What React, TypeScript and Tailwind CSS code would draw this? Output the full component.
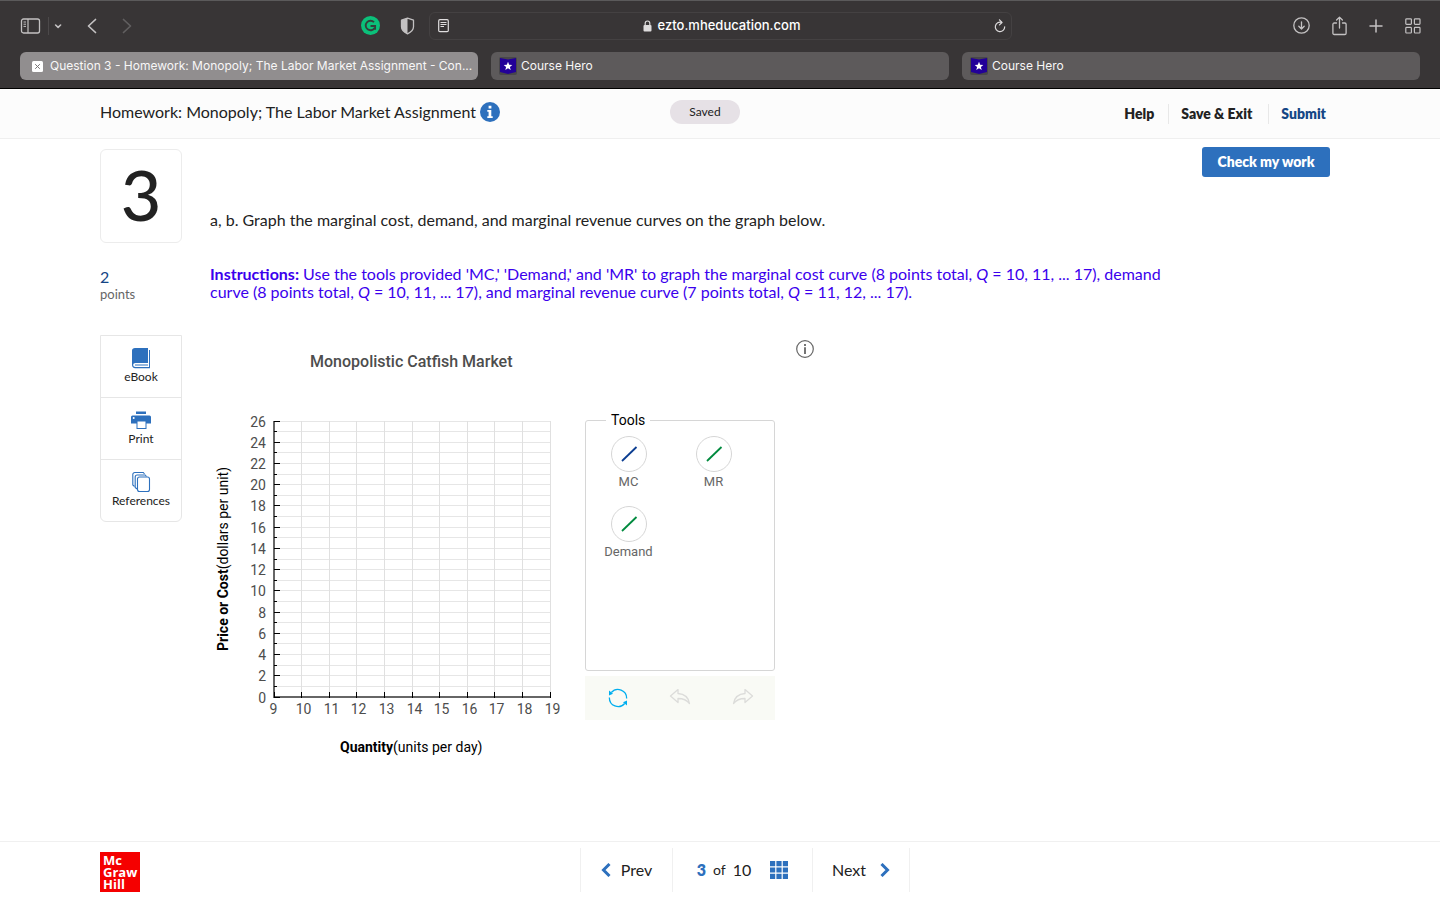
import React from 'react';
import clsx from 'clsx';

const tabs = [
  { title: 'Question 3 - Homework: Monopoly; The Labor Market Assignment - Con...', active: true },
  { title: 'Course Hero', active: false },
  { title: 'Course Hero', active: false },
];

const tools = [
  { name: 'MC', color: '#0b3d91' },
  { name: 'MR', color: '#008a3e' },
  { name: 'Demand', color: '#008a3e' },
];

const BrowserToolbar: React.FC = () => (
  <div className="flex h-[49px] items-center text-[#c3c1c2]">
    <div className="flex flex-1 items-center pl-5">
      <button aria-label="Show sidebar">
        <svg width="21" height="16" viewBox="0 0 21 16" fill="none" stroke="currentColor">
          <rect x="1.5" y="1" width="18" height="14" rx="2" strokeWidth="1.3" />
          <path d="M8 1v14" strokeWidth="1.2" />
          <path d="M3.5 4h2.5M3.5 6.2h2.5M3.5 8.4h2.5" strokeWidth="1" />
        </svg>
      </button>
      <span className="ml-[7px] h-[18px] w-px bg-[#4c494a]" />
      <button aria-label="Tab groups" className="ml-[5px]">
        <svg width="8" height="8" viewBox="0 0 8 8" fill="none" stroke="currentColor" strokeWidth="1.6" strokeLinecap="round" strokeLinejoin="round">
          <path d="M1.6 3L4.1 5.4 6.6 3" />
        </svg>
      </button>
      <button aria-label="Back" className="ml-6">
        <svg width="12" height="16" viewBox="0 0 12 16" fill="none" stroke="currentColor" strokeWidth="1.7" strokeLinecap="round" strokeLinejoin="round">
          <path d="M9.5 1.5L2.5 8l7 6.5" />
        </svg>
      </button>
      <button aria-label="Forward" className="ml-[23px] text-[#615f60]">
        <svg width="12" height="16" viewBox="0 0 12 16" fill="none" stroke="currentColor" strokeWidth="1.7" strokeLinecap="round" strokeLinejoin="round">
          <path d="M2.5 1.5l7 6.5-7 6.5" />
        </svg>
      </button>
      <div className="ml-auto flex items-center gap-5 pr-[14px]">
        <button aria-label="Grammarly">
          <svg width="19" height="19" viewBox="0 0 19 19" fill="none">
            <circle cx="9.5" cy="9.5" r="9.5" fill="#0bc07a" />
            <path d="M13 6.200A4.800 4.800 0 1 0 13.600 12" stroke="#33403a" strokeWidth="1.900" />
            <path d="M9.500 10h4.600v3.800" stroke="#33403a" strokeWidth="1.900" />
          </svg>
        </button>
        <button aria-label="Privacy report">
          <svg width="15" height="18" viewBox="0 0 15 18" fill="none">
            <path d="M7.5 1.200l6 2v6.600c0 3.200-2.500 5.400-6 7-3.500-1.600-6-3.800-6-7V3.200z" stroke="#c3c1c2" strokeWidth="1.3" strokeLinejoin="round" />
            <path d="M7.5 1.200v15.600c-3.500-1.600-6-3.800-6-7V3.200z" fill="#c3c1c2" />
          </svg>
        </button>
      </div>
    </div>

    <div className="flex h-7 w-[583px] items-center rounded-md border border-[#444142] pr-[5px] pl-2">
      <button aria-label="Reader view">
        <svg width="11" height="14" viewBox="0 0 11 14" fill="none" stroke="#e0dedf">
          <rect x="0.7" y="0.7" width="9.600" height="12" rx="1.2" strokeWidth="1.2" />
          <path d="M2.5 3.5h6M2.5 5.5h6M2.5 7.5h3.500" />
        </svg>
      </button>
      <div className="flex flex-1 items-center justify-center gap-[6px] text-[13px] font-medium text-white">
        <svg width="9" height="12" viewBox="0 0 9 12" fill="none">
          <rect x="0.5" y="5" width="8" height="6.500" rx="1" fill="#dddbdc" />
          <path d="M2.2 5.500V3.300a2.300 2.300 0 0 1 4.600 0v2.200" stroke="#dddbdc" strokeWidth="1.2" />
        </svg>
        ezto.mheducation.com
      </div>
      <button aria-label="Reload">
        <svg width="12" height="14" viewBox="0 0 12 14" fill="none" stroke="#dddbdc" strokeWidth="1.2" strokeLinecap="round" strokeLinejoin="round">
          <path d="M7.5 3.400A4.700 4.700 0 1 0 10.700 7.800" />
          <path d="M5.5 0.800L8 3.500 5.500 5.900" />
        </svg>
      </button>
    </div>

    <div className="flex flex-1 items-center justify-end gap-[22px] pr-[19px]">
      <button aria-label="Downloads">
        <svg width="17" height="17" viewBox="0 0 17 17" fill="none" stroke="currentColor" strokeWidth="1.3" strokeLinecap="round" strokeLinejoin="round">
          <circle cx="8.5" cy="8.5" r="7.700" />
          <path d="M8.5 4.800v7M5.800 9.300l2.700 2.700 2.700-2.700" />
        </svg>
      </button>
      <button aria-label="Share">
        <svg width="15" height="20" viewBox="0 0 15 20" fill="none" stroke="currentColor" strokeWidth="1.3" strokeLinecap="round" strokeLinejoin="round">
          <path d="M4.5 7H2.200a1.300 1.300 0 0 0-1.300 1.300v8.900a1.300 1.300 0 0 0 1.300 1.300h10.600a1.300 1.300 0 0 0 1.300-1.300V8.300A1.300 1.300 0 0 0 12.800 7h-2.300" />
          <path d="M7.5 12V1.200M4.600 4l2.900-2.900L10.400 4" />
        </svg>
      </button>
      <button aria-label="New tab">
        <svg width="14" height="14" viewBox="0 0 14 14" stroke="currentColor" strokeWidth="1.5" strokeLinecap="round">
          <path d="M7 1v12M1 7h12" />
        </svg>
      </button>
      <button aria-label="Tab overview">
        <svg width="16" height="16" viewBox="0 0 16 16" fill="none" stroke="currentColor" strokeWidth="1.2">
          <rect x="0.8" y="0.8" width="5.600" height="5.600" rx="0.8" />
          <rect x="9.4" y="0.8" width="5.600" height="5.600" rx="0.8" />
          <rect x="0.8" y="9.4" width="5.600" height="5.600" rx="0.8" />
          <rect x="9.4" y="9.4" width="5.600" height="5.600" rx="0.8" />
        </svg>
      </button>
    </div>
  </div>
);

const BrowserTabs: React.FC = () => (
  <div className="grid grid-cols-3 gap-[13px] px-5 pt-[2px] pb-2">
    {tabs.map((tab, i) => (
      <button
        key={i}
        className={clsx(
          'flex h-7 min-w-0 items-center rounded-md text-left text-xs text-[#f8f7f7]',
          tab.active ? 'gap-[7px] bg-[#918e8f] pl-3' : 'gap-1 bg-[#5d5a5b] pl-2'
        )}
      >
        {tab.active ? (
          <svg width="11" height="11" viewBox="0 0 11 11" className="shrink-0">
            <rect width="11" height="11" rx="1.5" fill="#fff" />
            <path d="M3.200 3.200l4.600 4.600M7.800 3.200L3.200 7.800" stroke="#777475" strokeWidth="1" />
          </svg>
        ) : (
          <svg width="18" height="18" viewBox="0 0 18 18" className="shrink-0">
            <rect width="18" height="18" rx="2" fill="#49474a" />
            <path d="M1 1l8 1.500L17 1v14l-8 2-8-2z" fill="#220098" />
            <path d="M9 4.800l1.200 2.900 3.100.2-2.400 2 .8 3L9 11.300l-2.700 1.600.8-3-2.400-2 3.100-.2z" fill="#fff" />
          </svg>
        )}
        <span className="whitespace-nowrap">{tab.title}</span>
      </button>
    ))}
  </div>
);

const PageHeader: React.FC = () => (
  <header className="flex h-[50px] items-center border-b border-[#efefef] bg-[#fcfcfc] pr-[114px] pl-[100px] text-[#222]">
    <div className="flex w-[570px] items-center gap-1 pb-1">
      <h1 className="text-base">Homework: Monopoly; The Labor Market Assignment</h1>
      <button aria-label="Assignment information">
        <svg width="20" height="20" viewBox="0 0 20 20">
          <circle cx="10" cy="10" r="10" fill="#2d70bd" />
          <path d="M8.600 3.800h2.800v2.700H8.600zM7.300 8h4v6.200h1.400v1.700H7.300v-1.700h1.300V9.700H7.300z" fill="#fff" />
        </svg>
      </button>
    </div>
    <div className="mb-1 flex h-6 w-[70px] items-center justify-center rounded-full bg-[#e6e1e6] text-xs">Saved</div>
    <nav className="ml-auto flex items-center text-sm leading-5 font-extrabold">
      <a href="#help" className="pr-[14px]">Help</a>
      <a href="#exit" className="border-l border-[#e8e8e8] px-3 pr-4">Save &amp; Exit</a>
      <a href="#submit" className="border-l border-[#e8e8e8] pl-3 text-[#154685]">Submit</a>
    </nav>
  </header>
);

const resources = [
  {
    label: 'eBook',
    icon: (
      <svg width="20" height="22" viewBox="0 0 20 22">
        <path d="M4 1h13v15H4.500C3 16 2.200 16.800 2.200 18S3 20 4.500 20H18V3h1v18.200H4.200C2.200 21.200 1 20 1 18V3.500C1 2 2.200 1 4 1z" fill="#2d70bd" />
        <path d="M4 18h13" stroke="#2d70bd" strokeWidth="1" />
      </svg>
    ),
  },
  {
    label: 'Print',
    icon: (
      <svg width="20" height="22" viewBox="0 0 20 22">
        <path d="M5 2.500h10V5H5z" fill="#2d70bd" />
        <path d="M1.500 6.500h17A1.500 1.500 0 0 1 20 8v6.500h-4.500V20h-10v-5.500H0V8a1.500 1.500 0 0 1 1.500-1.500z" fill="#2d70bd" />
        <path d="M6.500 12.500h8V19h-8z" fill="#fff" />
        <circle cx="2.700" cy="9" r="1" fill="#fff" />
      </svg>
    ),
  },
  {
    label: 'References',
    icon: (
      <svg width="20" height="22" viewBox="0 0 20 22" fill="#fff" stroke="#2d70bd" strokeWidth="1.1">
        <path d="M3.500 15.500L1.800 14V3.500a2 2 0 0 1 2-2h8.500L13.500 3" />
        <path d="M6 18l-1.800-1.500V6a2 2 0 0 1 2-2h8L15.500 5.500" />
        <path d="M8.500 6h8a2 2 0 0 1 2 2v10.500a2 2 0 0 1-2 2H8.500a2 2 0 0 1-2-2V8a2 2 0 0 1 2-2z" />
      </svg>
    ),
  },
];

const Sidebar: React.FC = () => (
  <aside className="w-[82px] shrink-0 pt-[2px]">
    <div className="flex h-[94px] items-center justify-center rounded-md border border-[#ececec] pb-1 text-[70px] leading-none font-medium text-[#222]">3</div>
    <div className="mt-[25px] text-base leading-[18px] text-[#154685]">2</div>
    <div className="text-[13px] leading-4 text-[#666]">points</div>
    <div className="mt-[33px] flex flex-col rounded-b-md border border-[#e6e6e6]">
      {resources.map((r, i) => (
        <button
          key={r.label}
          className={clsx(
            'flex flex-col items-center pt-[11px] pb-3 text-xs leading-4 text-[#222]',
            i > 0 && 'border-t border-[#e6e6e6]'
          )}
        >
          {r.icon}
          {r.label}
        </button>
      ))}
    </div>
  </aside>
);

// Plot area in svg units
const LEFT = 64;
const TOP = 21;
const SIZE = 276;

const Graph: React.FC = () => {
  const xs = Array.from({ length: 11 }, (_, i) => i);
  const ys = Array.from({ length: 27 }, (_, i) => i);
  const px = (i: number) => Math.floor(LEFT + (i * SIZE) / 10) + 0.5;
  const py = (v: number) => Math.floor(TOP + SIZE - (v * SIZE) / 26) + 0.5;

  return (
    <svg width="360" height="360" viewBox="0 0 360 360" className="font-[Roboto,sans-serif] text-sm">
      {ys.map(v => (
        <line key={v} x1={LEFT} x2={LEFT + SIZE} y1={py(v)} y2={py(v)} stroke="#e6e6e6" />
      ))}
      {xs.map(i => (
        <line key={i} x1={px(i)} x2={px(i)} y1={TOP} y2={TOP + SIZE} stroke="#e0e0e0" />
      ))}

      {/* Axes */}
      <path d={`M${LEFT} ${TOP}V${TOP + SIZE}H${LEFT + SIZE + 1}`} fill="none" stroke="#666" strokeWidth="2" />
      {ys.map(v => (
        <line key={v} x1={LEFT} x2={LEFT + (v % 2 ? 3 : 6)} y1={py(v)} y2={py(v)} stroke="#000" />
      ))}
      {xs.map(i => (
        <line key={i} x1={px(i)} x2={px(i)} y1={TOP + SIZE - 5} y2={TOP + SIZE + 1} stroke="#000" />
      ))}

      {/* Tick labels */}
      {ys.filter(v => v % 2 === 0).map(v => (
        <text key={v} x="56" y={py(v) + 5} textAnchor="end" fill="#4d4d4d">{v}</text>
      ))}
      {xs.map(i => (
        <text key={i} x={px(i) + (i === 0 ? -1 : 2)} y="314" textAnchor="middle" fill="#4d4d4d">{i + 9}</text>
      ))}

      <text transform="translate(18 251) rotate(-90)">
        <tspan className="font-bold">Price or Cost</tspan>(dollars per unit)
      </text>
      <text x="130" y="352">
        <tspan className="font-bold">Quantity</tspan>(units per day)
      </text>
    </svg>
  );
};

const ToolPanel: React.FC = () => (
  <div className="w-[190px] pt-[71px] font-[Roboto,sans-serif]">
    <fieldset className="h-[260px] rounded-[3px] border border-[#d6d6d6]">
      <legend className="ml-5 px-[5px] text-sm leading-[18px] text-black">Tools</legend>
      <div className="grid w-[170px] grid-cols-2 gap-y-[14px] pt-[7px]">
        {tools.map(tool => (
          <button key={tool.name} className="flex flex-col items-center text-[13px] leading-5 text-[#666]">
            <svg width="36" height="36" viewBox="0 0 36 36" fill="none">
              <circle cx="18" cy="18" r="17.5" stroke="#d6d6d6" />
              <path d="M11 25L25.500 11" stroke={tool.color} strokeWidth="1.8" />
            </svg>
            {tool.name}
          </button>
        ))}
      </div>
    </fieldset>
    <div className="mt-[5px] flex h-11 items-center justify-around bg-[#f9faf5] pl-[2px]">
      <button aria-label="Reset">
        <svg width="20" height="20" viewBox="0 0 20 20" fill="none" stroke="#00aeef" strokeWidth="1.3">
          <path d="M3.300 4.500A8.700 8.700 0 0 1 18.600 10.500" />
          <path d="M16.700 15.500A8.700 8.700 0 0 1 1.400 9.500" />
          <path d="M1 2.500v5l4-1.700zM19 17.500v-5l-4 1.700z" fill="#00aeef" stroke="none" />
        </svg>
      </button>
      <button aria-label="Undo">
        <svg width="22" height="18" viewBox="0 0 22 18" fill="none" stroke="#dcdcda" strokeWidth="1.3" strokeLinejoin="round">
          <path d="M9 .5L1.500 7 9 13.500v-4c5 0 8.500 1 11.500 5-1-6-5-9.500-11.500-10z" />
        </svg>
      </button>
      <button aria-label="Redo">
        <svg width="22" height="18" viewBox="0 0 22 18" fill="none" stroke="#dcdcda" strokeWidth="1.3" strokeLinejoin="round">
          <path d="M13 .5L20.500 7 13 13.500v-4c-5 0-8.500 1-11.500 5 1-6 5-9.500 11.500-10z" />
        </svg>
      </button>
    </div>
  </div>
);

const Question: React.FC = () => (
  <section className="flex min-w-0 flex-1 flex-col text-base leading-[18px] text-[#222]">
    <button className="h-[30px] w-32 self-end rounded-[3px] bg-[#2d70bd] text-sm font-extrabold text-white">Check my work</button>
    <p className="mt-[34px]">a, b. Graph the marginal cost, demand, and marginal revenue curves on the graph below.</p>
    <p className="mt-9 max-w-[970px] text-[#3b00ed]">
      <strong>Instructions:</strong> Use the tools provided 'MC,' 'Demand,' and 'MR' to graph the marginal cost curve (8 points total, <em>Q</em> = 10, 11, ... 17), demand curve (8 points total, <em>Q</em> = 10, 11, ... 17), and marginal revenue curve (7 points total, <em>Q</em> = 11, 12, ... 17).
    </p>
    <div className="mt-[39px] flex items-start">
      <div className="w-[375px]">
        <h2 className="pt-[13px] pb-[29px] pl-[100px] font-[Roboto,sans-serif] font-medium text-[#4d4d4d]">Monopolistic Catfish Market</h2>
        <Graph />
      </div>
      <ToolPanel />
      <button aria-label="Graph help" className="ml-[21px]">
        <svg width="18" height="18" viewBox="0 0 18 18" fill="none" stroke="#666">
          <circle cx="9" cy="9" r="8.300" strokeWidth="1.2" />
          <path d="M9 7.300V14M9 4v2" strokeWidth="1.8" />
        </svg>
      </button>
    </div>
  </section>
);

const PageFooter: React.FC = () => (
  <footer className="mt-auto grid h-[59px] grid-cols-[1fr_auto_1fr] border-t border-[#f0f0f0] pr-[50px] pl-[100px] text-[#222]">
    <div className="mt-[10px] h-10 w-10 bg-[#f50000] pt-[2px] pl-[3px] font-['Open_Sans',sans-serif] text-[13px] leading-3 font-bold text-white">
      Mc<br />Graw<br />Hill
    </div>
    <nav className="mt-[6px] flex h-11 divide-x divide-[#f0f0f0] border-x border-[#f0f0f0] text-base">
      <button className="flex w-[92px] items-center justify-center gap-[10px]">
        <svg width="10" height="14" viewBox="0 0 10 14" fill="none" stroke="#2d70bd" strokeWidth="3">
          <path d="M8.500 1L2.500 7l6 6" />
        </svg>
        Prev
      </button>
      <div className="flex w-[140px] items-center justify-center gap-[7px]">
        <span className="font-extrabold text-[#2d70bd]">3</span>
        <span className="text-sm">of</span>
        <span>10</span>
        <button aria-label="Question list" className="ml-3">
          <svg width="18" height="18" viewBox="0 0 18 18" fill="#2d70bd">
            <path d="M0 0h5.200v5.200H0zM6.400 0h5.200v5.200H6.400zM12.800 0H18v5.200h-5.200zM0 6.400h5.200v5.200H0zM6.400 6.400h5.200v5.200H6.400zM12.800 6.400H18v5.200h-5.200zM0 12.800h5.200V18H0zM6.400 12.800h5.200V18H6.400zM12.800 12.800H18V18h-5.200z" />
          </svg>
        </button>
      </div>
      <button className="flex w-24 items-center justify-center gap-[14px]">
        Next
        <svg width="10" height="14" viewBox="0 0 10 14" fill="none" stroke="#2d70bd" strokeWidth="3">
          <path d="M1.500 1l6 6-6 6" />
        </svg>
      </button>
    </nav>
  </footer>
);

const App: React.FC = () => (
  <div className="flex min-h-screen flex-col bg-white font-[Lato,sans-serif]">
    <div className="border-t border-b border-t-[#5b5a5b] border-b-black bg-[#383536] font-[Inter,sans-serif]">
      <BrowserToolbar />
      <BrowserTabs />
    </div>
    <PageHeader />
    <main className="flex gap-7 pt-2 pr-[110px] pl-[100px]">
      <Sidebar />
      <Question />
    </main>
    <PageFooter />
  </div>
);

export default App;
